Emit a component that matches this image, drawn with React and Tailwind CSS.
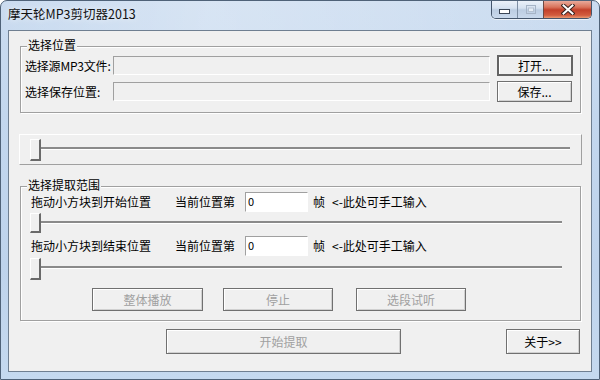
import React from 'react';

function GroupBox({ title, className, children }) {
  return (
    <div className={`relative border border-[#a0a0a0] shadow-[inset_1px_1px_0_#ffffff,1px_1px_0_#ffffff] ${className}`}>
      <span className="absolute left-[6px] -top-[9px] bg-[#f0f0f0] px-[1px] leading-[14px]">{title}</span>
      {children}
    </div>
  );
}

function Edit({ className = '', value, white }) {
  return (
    <div
      className={`flex items-start pl-[2px] pt-[1px] leading-[14px] text-[11px] border-t border-l border-t-[#a0a0a0] border-l-[#a0a0a0] border-b border-r border-b-white border-r-white ${
        white ? 'bg-white' : 'bg-[#f0f0f0]'
      } ${className}`}
    >
      {value}
    </div>
  );
}

function WinButton({ children, disabled, isDefault, className = '' }) {
  return (
    <button
      className={`flex items-center justify-center bg-[#f0f0f0] leading-none ${
        isDefault
          ? 'border-2 border-[#646464] shadow-[inset_1px_1px_0_#ffffff]'
          : 'border border-[#707070] shadow-[inset_1px_1px_0_#ffffff,inset_-1px_-1px_0_#d0d0d0]'
      } ${disabled ? 'text-[#a0a0a0]' : 'text-black'} ${className}`}
    >
      {children}
    </button>
  );
}

function Slider({ className = '', thumbH = 22 }) {
  return (
    <div className={`flex items-start ${className}`}>
      <div
        className={`w-[11px] shrink-0 bg-[#f0f0f0] border-l border-t border-l-white border-t-white border-r-2 border-b-2 border-r-[#6a6a6a] border-b-[#6a6a6a] ${
          thumbH === 20 ? 'h-[20px]' : 'h-[22px]'
        }`}
      />
      <div className="flex-1 mt-[8px] h-[3px] border-t-2 border-t-[#8a8a8a] border-b border-b-white" />
    </div>
  );
}

function CaptionButtons() {
  return (
    <div className="flex h-[19px] -mt-[1px] border border-[#44556b] border-t-0 rounded-b-[5px] overflow-hidden shadow-[0_1px_0_rgba(255,255,255,0.6)]">
      <div className="w-[26px] flex items-center justify-center bg-[linear-gradient(180deg,#eef3fa_0%,#d6e2f0_45%,#bccde2_55%,#c9d9ec_100%)] border-r border-[#7d8ea3]">
        <svg width="11" height="5" viewBox="0 0 11 5" className="mt-[5px]">
          <rect x="0.5" y="0.5" width="10" height="4" fill="#ffffff" stroke="#3b4656" />
        </svg>
      </div>
      <div className="w-[26px] flex items-center justify-center bg-[linear-gradient(180deg,#eef3fa_0%,#d6e2f0_45%,#bccde2_55%,#c9d9ec_100%)] border-r border-[#6e4a44]">
        <svg width="10" height="9" viewBox="0 0 10 9">
          <rect x="0.5" y="0.5" width="9" height="8" fill="none" stroke="#a6b4c6" />
          <rect x="2.5" y="3" width="5" height="3.5" fill="#e6edf5" stroke="#b5c2d2" />
        </svg>
      </div>
      <div className="w-[47px] flex items-center justify-center bg-[linear-gradient(180deg,#ebb3a5_0%,#d9735b_40%,#c2402a_55%,#d25d3f_85%,#e99a73_100%)]">
        <svg width="14" height="11" viewBox="0 0 14 11">
          <path d="M2.5 1.5 L11.5 9.5 M11.5 1.5 L2.5 9.5" stroke="#3a2420" strokeWidth="4" strokeLinecap="square" />
          <path d="M2.5 1.5 L11.5 9.5 M11.5 1.5 L2.5 9.5" stroke="#ffffff" strokeWidth="2" strokeLinecap="square" />
        </svg>
      </div>
    </div>
  );
}

export default function App() {
  return (
    <div className="w-[600px] h-[380px] flex flex-col border border-[#4f6278] rounded-t-[7px] bg-[linear-gradient(180deg,#cbdcf0_0%,#c3d7ee_30%,#bed3ec_70%,#c5d9ef_100%)] font-['Noto_Sans_CJK_SC','Noto_Sans',sans-serif] text-[12px] text-black overflow-hidden">
      <div className="h-[29px] shrink-0 flex items-start justify-between pl-[7px] pr-[7px] bg-[linear-gradient(90deg,rgba(255,255,255,0)_0%,rgba(255,255,255,0.25)_35%,rgba(255,255,255,0.15)_65%,rgba(255,255,255,0)_100%)]">
        <span className="pt-[4px] text-[12.5px] leading-[18px] text-[#111] [text-shadow:0_0_6px_rgba(255,255,255,0.9)]">
          摩天轮MP3剪切器2013
        </span>
        <CaptionButtons />
      </div>

      <div className="mx-[7px] h-[342px] border border-[#6f7f91] bg-[#f0f0f0] flex flex-col">
        <GroupBox title="选择位置" className="mt-[15px] ml-[11px] w-[561px] h-[67px] shrink-0">
          <div className="mt-[8px] pl-[4px] flex items-center h-[21px]">
            <span className="w-[88px] whitespace-nowrap tracking-[-0.2px]">选择源MP3文件:</span>
            <Edit className="w-[377px] h-[19px]" />
            <WinButton isDefault className="ml-[7px] w-[76px] h-[21px]">
              打开...
            </WinButton>
          </div>
          <div className="mt-[5px] pl-[4px] flex items-center h-[21px]">
            <span className="w-[88px] whitespace-nowrap">选择保存位置:</span>
            <Edit className="w-[377px] h-[19px]" />
            <WinButton className="ml-[7px] w-[75px] h-[21px]">保存...</WinButton>
          </div>
        </GroupBox>

        <div className="mt-[21px] ml-[10px] w-[563px] h-[31px] shrink-0 border-t border-l border-t-white border-l-white border-b border-r border-b-[#a0a0a0] border-r-[#a0a0a0] pt-[4px] pl-[10px] pr-[11px]">
          <Slider />
        </div>

        <GroupBox title="选择提取范围" className="mt-[21px] ml-[11px] w-[561px] h-[135px] shrink-0">
          <div className="mt-[5px] h-[20px] flex items-center pl-[10px] whitespace-nowrap leading-[14px]">
            <span className="w-[144px]">拖动小方块到开始位置</span>
            <span className="w-[70px]">当前位置第</span>
            <Edit white value="0" className="w-[63px] h-[20px]" />
            <span className="ml-[5px]">帧</span>
            <span className="ml-[7px]">&lt;-此处可手工输入</span>
          </div>
          <Slider thumbH={20} className="mt-[1px] pl-[9px] pr-[18px]" />
          <div className="mt-[3px] h-[20px] flex items-center pl-[10px] whitespace-nowrap leading-[14px]">
            <span className="w-[144px]">拖动小方块到结束位置</span>
            <span className="w-[70px]">当前位置第</span>
            <Edit white value="0" className="w-[63px] h-[20px]" />
            <span className="ml-[5px]">帧</span>
            <span className="ml-[7px]">&lt;-此处可手工输入</span>
          </div>
          <Slider className="mt-[2px] pl-[9px] pr-[18px]" />
          <div className="mt-[8px] pl-[71px] flex">
            <WinButton disabled className="w-[111px] h-[23px]">整体播放</WinButton>
            <WinButton disabled className="ml-[20px] w-[110px] h-[23px]">停止</WinButton>
            <WinButton disabled className="ml-[23px] w-[110px] h-[23px]">选段试听</WinButton>
          </div>
        </GroupBox>

        <div className="mt-[8px] ml-[157px] flex">
          <WinButton disabled className="w-[235px] h-[25px]">开始提取</WinButton>
          <WinButton className="ml-[105px] w-[74px] h-[25px]">关于&gt;&gt;</WinButton>
        </div>
      </div>
    </div>
  );
}
